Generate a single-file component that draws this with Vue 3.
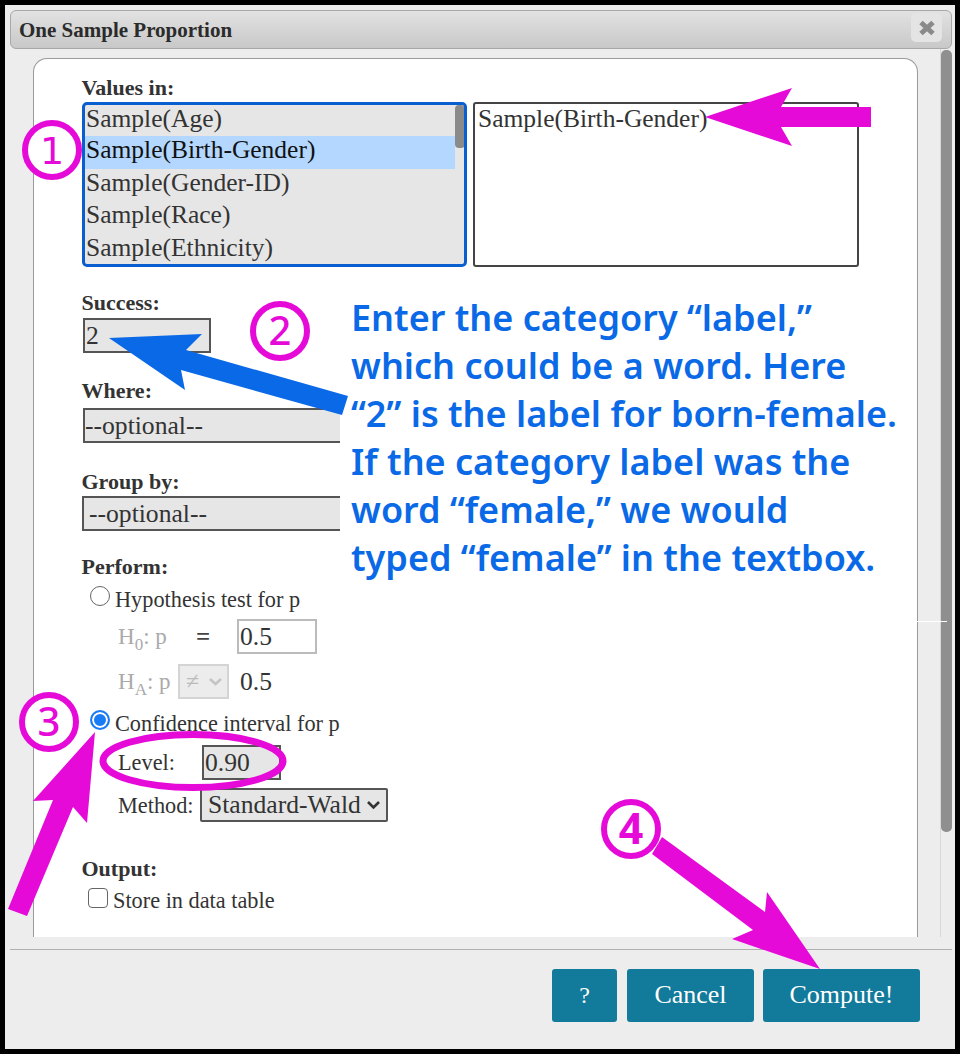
<script setup>
const options = ['Sample(Age)', 'Sample(Birth-Gender)', 'Sample(Gender-ID)', 'Sample(Race)', 'Sample(Ethnicity)']
const note = [
  'Enter the category “label,”',
  'which could be a word. Here',
  '“2” is the label for born-female.',
  'If the category label was the',
  'word “female,” we would',
  'typed “female” in the textbox.'
]
const circles = [
  { cx: 52, cy: 150, d: '1', w: 400, f: 'DejaVu Sans', s: 38, o: 14 },
  { cx: 280, cy: 331, d: '2', w: 500, f: 'Noto Sans', s: 40, o: 14 },
  { cx: 49, cy: 722, d: '3', w: 500, f: 'Noto Sans', s: 40, o: 14 },
  { cx: 631, cy: 829, d: '4', w: 700, f: 'Noto Sans', s: 43, o: 15 }
]
</script>

<template>
  <div class="frame">
    <div class="dialog">
      <header class="titlebar">
        <span class="title">One Sample Proportion</span>
        <button class="close" aria-label="Close">
          <svg width="18" height="16" viewBox="0 0 18 16"><path d="M3 2.5 L15 13.5 M15 2.5 L3 13.5" stroke="#8a8a8a" stroke-width="5" fill="none" /></svg>
        </button>
      </header>

      <div class="main">
        <section class="panel">
          <div class="label first">Values in:</div>
          <div class="lists">
            <div class="listbox active">
              <div v-for="(o, i) in options" :key="o" class="option" :class="{ selected: i === 1 }">{{ o }}</div>
              <span class="list-thumb"></span>
            </div>
            <div class="listbox target">
              <div class="option">Sample(Birth-Gender)</div>
            </div>
          </div>

          <div class="label success">Success:</div>
          <input class="field success-input" value="2" />

          <div class="label where">Where:</div>
          <select class="field wide where-select"><option>--optional--</option></select>

          <div class="label group">Group by:</div>
          <select class="field wide group-select"><option>--optional--</option></select>

          <div class="label perform">Perform:</div>
          <label class="choice hypothesis"><span class="radio"></span>Hypothesis test for p</label>
          <div class="sub h0">
            <span class="muted h0-label">H<sub>0</sub>: p</span>
            <span class="equals">=</span>
            <input class="null-input" value="0.5" />
          </div>
          <div class="sub ha">
            <span class="muted ha-label">H<sub>A</sub>: p</span>
            <span class="ne-select">≠
              <svg width="15" height="9" viewBox="0 0 15 9"><path d="M2 2 L7.5 7 L13 2" stroke="#c4c4c4" stroke-width="2.6" fill="none" /></svg>
            </span>
            <span class="ha-val">0.5</span>
          </div>
          <label class="choice ci"><span class="radio on"></span>Confidence interval for p</label>
          <div class="sub level">
            <span class="level-label">Level:</span>
            <input class="field level-input" value="0.90" />
          </div>
          <div class="sub method">
            <span class="method-label">Method:</span>
            <span class="method-select">Standard-Wald
              <svg width="15" height="10" viewBox="0 0 15 10"><path d="M2 2 L7.5 7.5 L13 2" stroke="#333" stroke-width="2.6" fill="none" /></svg>
            </span>
          </div>

          <div class="label output">Output:</div>
          <label class="choice store"><span class="check"></span>Store in data table</label>
        </section>
        <div class="scroll"><span class="scroll-thumb"></span></div>
      </div>

      <footer class="footer">
        <button class="btn help">?</button>
        <button class="btn cancel">Cancel</button>
        <button class="btn compute">Compute!</button>
      </footer>
    </div>

    <div class="note">
      <div v-for="l in note" :key="l" class="note-line">{{ l }}</div>
    </div>

    <svg class="marks" width="960" height="1054" viewBox="0 0 960 1054">
      <line x1="917" y1="621.5" x2="947" y2="621.5" stroke="#fff" stroke-width="1" />
      <polygon fill="#e60ad8" points="705,117 792,88 781,107 871,107 871,127 781,127 792,146" />
      <polygon fill="#0a69e6" points="109,338 202,334 186,350 348,396 342,415 181,370 185,390" />
      <polygon fill="#e60ad8" points="95,732 87,823 73,807 27,916 8,909 53,800 33,801" />
      <polygon fill="#e60ad8" points="820,969 767,892 765,912 662,837 652,854 753,930 732,939" />
      <ellipse cx="193" cy="761" rx="90" ry="26.5" fill="none" stroke="#e60ad8" stroke-width="7" />
      <g v-for="c in circles" :key="c.d">
        <circle :cx="c.cx" :cy="c.cy" r="27" fill="#fff" stroke="#e60ad8" stroke-width="6" />
        <text :x="c.cx" :y="c.cy + c.o" text-anchor="middle" fill="#e60ad8" :font-family="c.f" :font-size="c.s" :font-weight="c.w">{{ c.d }}</text>
      </g>
    </svg>
  </div>
</template>

<style>
html, body { margin: 0; background: #000; }
</style>

<style scoped>
.frame {
  position: relative;
  width: 960px;
  height: 1054px;
  box-sizing: border-box;
  padding: 5px;
  background: #000;
  overflow: hidden;
  font-family: "Liberation Serif", "Times New Roman", serif;
  color: #333;
}
.dialog {
  height: 1044px;
  box-sizing: border-box;
  padding: 5px 3px 0 5px;
  background: #ededed;
  display: flex;
  flex-direction: column;
}
.titlebar {
  height: 39px;
  flex: none;
  box-sizing: border-box;
  border: 1px solid #a8a8a8;
  border-radius: 6px;
  background: linear-gradient(#e2e2e2, #c8c8c8);
  display: flex;
  align-items: center;
  justify-content: space-between;
  padding: 2px 9px 0 8px;
}
.title { font-size: 21px; font-weight: 700; color: #2b2b2b; }
.close {
  width: 31px;
  height: 29px;
  margin-top: -6px;
  padding: 0;
  border: 0;
  border-radius: 5px;
  background: #e4e4e4;
  display: flex;
  align-items: center;
  justify-content: center;
}
.main {
  height: 888px;
  flex: none;
  display: flex;
  justify-content: space-between;
  align-items: flex-start;
}
.panel {
  width: 885px;
  height: 879px;
  margin: 9px 0 0 23px;
  box-sizing: border-box;
  padding: 17px 0 0 48px;
  background: #fff;
  border: 1.5px solid #9a9a9a;
  border-bottom: 0;
  border-radius: 14px 14px 0 0;
  font-size: 22.3px;
  overflow: hidden;
}
.scroll {
  width: 12px;
  height: 888px;
  box-sizing: border-box;
  border-left: 1px solid #d8d8d8;
  position: relative;
}
.scroll-thumb {
  display: block;
  width: 11px;
  height: 782px;
  margin-top: 1px;
  background: #8f8f8f;
  border-radius: 5px;
}
.label { font-weight: 700; font-size: 22px; line-height: 24px; color: #333; margin-left: -0.5px; }
.lists { display: flex; gap: 6px; margin-top: 2px; }
.listbox {
  position: relative;
  box-sizing: border-box;
  height: 165px;
  font-size: 25.5px;
  overflow: hidden;
}
.active {
  width: 385px;
  background: #e6e6e6;
  border: 3px solid #0a5fd0;
  border-radius: 5px;
}
.target {
  width: 386px;
  border: 2px solid #444;
  border-radius: 3px;
  background: #fff;
  padding-top: 1px;
  padding-left: 2px;
}
.option { height: 32.5px; line-height: 27px; padding-left: 1px; width: 370px; box-sizing: border-box; color: #333; white-space: nowrap; }
.active .option:first-child { height: 31px; }
.option.selected { background: #b3d7ff; color: #111; }
.list-thumb {
  position: absolute;
  left: 370px;
  top: 0;
  width: 10px;
  height: 43px;
  background: #8a8a8a;
  border-radius: 4px;
}
.field {
  display: block;
  box-sizing: border-box;
  height: 35px;
  background: #e6e6e6;
  border: 2px solid #555;
  border-radius: 0;
  outline: 0;
  font: 25.6px "Liberation Serif", "Times New Roman", serif;
  color: #333;
  padding: 0 1px;
}
.wide { width: 776px; appearance: none; }
.success { margin-top: 24px; }
.success-input { width: 128px; margin: 3px 0 0 1px; }
.where { margin-top: 26px; }
.where-select { margin: 5px 0 0 1px; padding-left: 0; }
.group { margin-top: 27px; }
.group-select { margin-top: 2px; padding-left: 5px; }
.perform { margin-top: 24px; }
.choice { display: flex; align-items: center; height: 32px; box-sizing: border-box; padding: 4px 0 0 8px; font-size: 22.3px; }
.radio {
  flex: none;
  box-sizing: border-box;
  width: 20px;
  height: 20px;
  margin: -8px 5px 0 0;
  border: 1.5px solid #666;
  border-radius: 50%;
  background: #fff;
}
.radio.on {
  border: 2px solid #1a7cf5;
  background: #1a7cf5;
  box-shadow: inset 0 0 0 2px #fff;
}
.check {
  flex: none;
  box-sizing: border-box;
  width: 20px;
  height: 20px;
  margin: -6px 5px 0 -2px;
  border: 1.5px solid #666;
  border-radius: 4px;
  background: #fff;
}
.hypothesis { margin-top: 3px; }
.sub { display: flex; align-items: center; padding-left: 36px; font-size: 22.3px; }
.muted { color: #aaa; font-size: 23px; }
.muted sub { font-size: 17px; line-height: 0; }
.h0 { height: 35px; margin-top: 5px; }
.h0-label { width: 78px; }
.equals { width: 41px; font-weight: 700; font-size: 25px; color: #444; }
.null-input {
  box-sizing: border-box;
  width: 80px;
  height: 35px;
  border: 2px solid #bbb;
  background: #fff;
  font: 25.6px "Liberation Serif", "Times New Roman", serif;
  color: #333;
  padding: 0 1px;
  outline: 0;
}
.ha { height: 35px; margin-top: 10px; }
.ha-label { width: 60px; }
.ne-select {
  box-sizing: border-box;
  width: 51px;
  height: 35px;
  background: #ececec;
  border: 2px solid #d4d4d4;
  color: #bbb;
  font-size: 24px;
  display: flex;
  align-items: center;
  justify-content: space-between;
  padding: 0 4px 0 6px;
}
.ha-val { margin-left: 11px; font-size: 25.6px; }
.ci { margin-top: 7px; }
.level { height: 35px; margin-top: 6px; padding-top: 1px; }
.level-label { width: 84px; }
.level-input { width: 79px; }
.method { height: 34px; margin-top: 8px; }
.method-label { width: 82px; padding-top: 2px; }
.method-select {
  box-sizing: border-box;
  width: 188px;
  height: 34px;
  background: #e6e6e6;
  border: 2px solid #555;
  border-radius: 2px;
  font-size: 25.6px;
  display: flex;
  align-items: center;
  justify-content: space-between;
  padding: 0 5px 0 6px;
}
.output { margin-top: 35px; }
.store { margin-top: 4px; padding-top: 0; }
.footer {
  flex: 1;
  border-top: 1.5px solid #b0b0b0;
  margin-top: 12px;
  padding: 18.5px 32px 0 0;
  display: flex;
  justify-content: flex-end;
  align-items: flex-start;
}
.btn {
  height: 53px;
  border: 0;
  border-radius: 3px;
  background: #127a9a;
  color: #fff;
  font: 26px "Liberation Serif", "Times New Roman", serif;
  padding: 0;
}
.help { width: 65px; font-size: 24px; }
.cancel { width: 127px; margin-left: 10px; }
.compute { width: 157px; margin-left: 9px; }
.note {
  position: absolute;
  left: 340px;
  top: 293px;
  width: 577px;
  height: 328px;
  box-sizing: border-box;
  padding: 1px 0 0 11px;
  background: #fff;
  font-family: "Noto Sans", sans-serif;
  font-weight: 600;
  font-size: 36px;
  line-height: 48px;
  color: #0a69e6;
}
.note-line { white-space: nowrap; }
.marks { position: absolute; left: 0; top: 0; pointer-events: none; }
</style>
